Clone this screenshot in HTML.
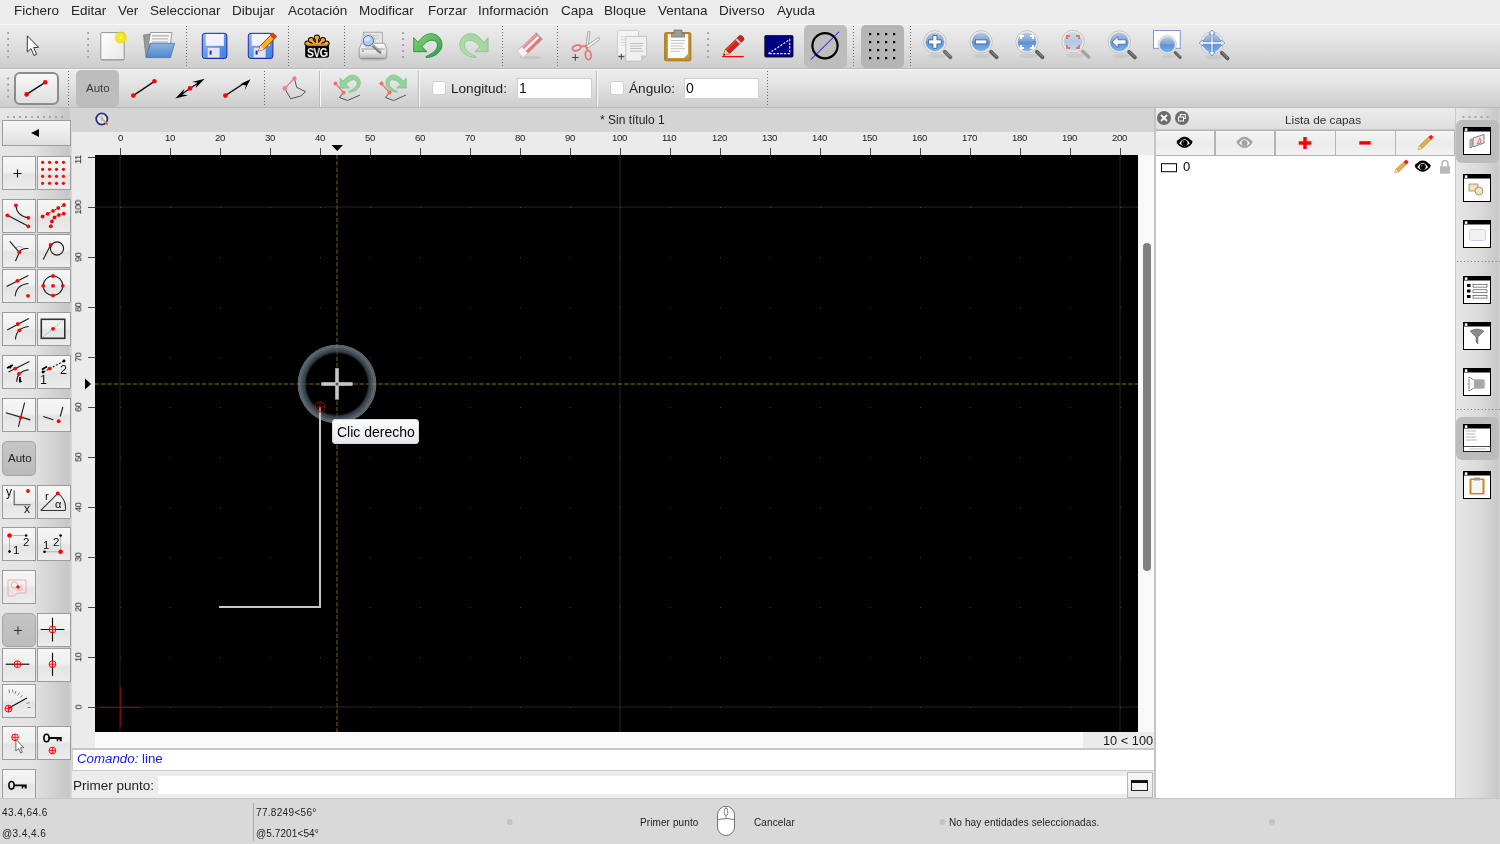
<!DOCTYPE html>
<html><head><meta charset="utf-8">
<style>
*{margin:0;padding:0;box-sizing:border-box}
html,body{width:1500px;height:844px;overflow:hidden;background:#ececec;font-family:"Liberation Sans",sans-serif;color:#222}
.a{position:absolute}
.t{white-space:nowrap;line-height:1.15;will-change:transform}
svg{position:absolute;left:0;top:0}
</style></head><body>
<div class="a " style="left:0px;top:0px;width:1500px;height:24px;background:#ececec"></div>
<div class="a " style="left:0px;top:24px;width:1500px;height:45px;background:linear-gradient(#ececec,#e4e4e4 35%,#cdcdcd);border-top:1px solid #f6f6f6;border-bottom:1px solid #bababa"></div>
<div class="a " style="left:0px;top:69px;width:1500px;height:39px;background:linear-gradient(#ececec,#e4e4e4 35%,#cdcdcd);border-top:1px solid #f6f6f6;border-bottom:1px solid #bababa"></div>
<span class="a t" style="left:14px;top:3px;font-size:13.5px;color:#262626">Fichero</span>
<span class="a t" style="left:71px;top:3px;font-size:13.5px;color:#262626">Editar</span>
<span class="a t" style="left:118px;top:3px;font-size:13.5px;color:#262626">Ver</span>
<span class="a t" style="left:150px;top:3px;font-size:13.5px;color:#262626">Seleccionar</span>
<span class="a t" style="left:232px;top:3px;font-size:13.5px;color:#262626">Dibujar</span>
<span class="a t" style="left:288px;top:3px;font-size:13.5px;color:#262626">Acotación</span>
<span class="a t" style="left:359px;top:3px;font-size:13.5px;color:#262626">Modificar</span>
<span class="a t" style="left:428px;top:3px;font-size:13.5px;color:#262626">Forzar</span>
<span class="a t" style="left:478px;top:3px;font-size:13.5px;color:#262626">Información</span>
<span class="a t" style="left:561px;top:3px;font-size:13.5px;color:#262626">Capa</span>
<span class="a t" style="left:604px;top:3px;font-size:13.5px;color:#262626">Bloque</span>
<span class="a t" style="left:658px;top:3px;font-size:13.5px;color:#262626">Ventana</span>
<span class="a t" style="left:719px;top:3px;font-size:13.5px;color:#262626">Diverso</span>
<span class="a t" style="left:777px;top:3px;font-size:13.5px;color:#262626">Ayuda</span>
<div class="a " style="left:0px;top:108px;width:72px;height:690px;background:linear-gradient(90deg,#e6e6e6,#e2e2e2 45%,#c6c6c6 96%,#dcdcdc)"></div>
<div class="a " style="left:72px;top:108px;width:1082px;height:24px;background:#d4d4d4"></div>
<span class="a t" style="left:600px;top:114px;font-size:12px;color:#1e1e1e">* Sin título 1</span>
<div class="a " style="left:72px;top:132px;width:1082px;height:23px;background:#ebebeb"></div>
<div class="a " style="left:72px;top:155px;width:23px;height:593px;background:#ebebeb"></div>
<div class="a " style="left:95px;top:155px;width:1043px;height:577px;background:#000"></div>
<div class="a " style="left:1138px;top:155px;width:16px;height:577px;background:#f9f9f9"></div>
<div class="a " style="left:95px;top:732px;width:1059px;height:16px;background:#f9f9f9"></div>
<div class="a " style="left:1083px;top:732px;width:71px;height:16px;background:#ebebeb"></div>
<span class="a t" style="left:1102.5px;top:733.5px;font-size:12.8px;color:#1a1a1a">10 &lt; 100</span>
<div class="a " style="left:1143px;top:242.5px;width:8px;height:328px;background:#808080;border-radius:4px"></div>
<div class="a " style="left:72px;top:748px;width:1082px;height:2px;background:#c6c6c6"></div>
<div class="a " style="left:72px;top:750px;width:1082px;height:20px;background:#fff;border-left:1px solid #d0d0d0"></div>
<div class="a " style="left:72px;top:770px;width:1082px;height:1px;background:#c9c9c9"></div>
<div class="a " style="left:72px;top:771px;width:1082px;height:27px;background:#ececec"></div>
<span class="a t" style="left:77.3px;top:751.3px;font-size:13.3px;color:#1620e8"><i>Comando:</i> line</span>
<span class="a t" style="left:73px;top:778px;font-size:13.5px;color:#1e1e1e">Primer punto:</span>
<div class="a " style="left:158px;top:776px;width:969px;height:18px;background:#fff"></div>
<div class="a " style="left:1127px;top:772px;width:26px;height:26px;background:linear-gradient(#f6f6f6,#e6e6e6);border:1px solid #b8b8b8"></div>
<div class="a " style="left:1154px;top:108px;width:2px;height:690px;background:#c3c3c3"></div>
<div class="a " style="left:1156px;top:108px;width:299px;height:22px;background:linear-gradient(#ececec,#dedede);border-bottom:1px solid #c8c8c8"></div>
<div class="a " style="left:1156px;top:156px;width:299px;height:642px;background:#fff"></div>
<span class="a t" style="left:1284.5px;top:113.5px;font-size:11.8px;color:#2e2e2e">Lista de capas</span>
<div class="a " style="left:1455px;top:108px;width:45px;height:690px;background:linear-gradient(90deg,#d8d8d8,#e4e4e4 40%,#cfcfcf)"></div>
<div class="a " style="left:0px;top:798px;width:1500px;height:46px;background:#d9d9d9;border-top:1px solid #c5c5c5"></div>
<span class="a t" style="left:117.9px;top:132.3px;font-size:9.6px;letter-spacing:-0.35px;color:#1a1a1a">0</span>
<span class="a t" style="left:165.1px;top:132.3px;font-size:9.6px;letter-spacing:-0.35px;color:#1a1a1a">10</span>
<span class="a t" style="left:215.1px;top:132.3px;font-size:9.6px;letter-spacing:-0.35px;color:#1a1a1a">20</span>
<span class="a t" style="left:265.1px;top:132.3px;font-size:9.6px;letter-spacing:-0.35px;color:#1a1a1a">30</span>
<span class="a t" style="left:315.1px;top:132.3px;font-size:9.6px;letter-spacing:-0.35px;color:#1a1a1a">40</span>
<span class="a t" style="left:365.1px;top:132.3px;font-size:9.6px;letter-spacing:-0.35px;color:#1a1a1a">50</span>
<span class="a t" style="left:415.1px;top:132.3px;font-size:9.6px;letter-spacing:-0.35px;color:#1a1a1a">60</span>
<span class="a t" style="left:465.1px;top:132.3px;font-size:9.6px;letter-spacing:-0.35px;color:#1a1a1a">70</span>
<span class="a t" style="left:515.1px;top:132.3px;font-size:9.6px;letter-spacing:-0.35px;color:#1a1a1a">80</span>
<span class="a t" style="left:565.1px;top:132.3px;font-size:9.6px;letter-spacing:-0.35px;color:#1a1a1a">90</span>
<span class="a t" style="left:612.3px;top:132.3px;font-size:9.6px;letter-spacing:-0.35px;color:#1a1a1a">100</span>
<span class="a t" style="left:662.3px;top:132.3px;font-size:9.6px;letter-spacing:-0.35px;color:#1a1a1a">110</span>
<span class="a t" style="left:712.3px;top:132.3px;font-size:9.6px;letter-spacing:-0.35px;color:#1a1a1a">120</span>
<span class="a t" style="left:762.3px;top:132.3px;font-size:9.6px;letter-spacing:-0.35px;color:#1a1a1a">130</span>
<span class="a t" style="left:812.3px;top:132.3px;font-size:9.6px;letter-spacing:-0.35px;color:#1a1a1a">140</span>
<span class="a t" style="left:862.3px;top:132.3px;font-size:9.6px;letter-spacing:-0.35px;color:#1a1a1a">150</span>
<span class="a t" style="left:912.3px;top:132.3px;font-size:9.6px;letter-spacing:-0.35px;color:#1a1a1a">160</span>
<span class="a t" style="left:962.3px;top:132.3px;font-size:9.6px;letter-spacing:-0.35px;color:#1a1a1a">170</span>
<span class="a t" style="left:1012.3px;top:132.3px;font-size:9.6px;letter-spacing:-0.35px;color:#1a1a1a">180</span>
<span class="a t" style="left:1062.3px;top:132.3px;font-size:9.6px;letter-spacing:-0.35px;color:#1a1a1a">190</span>
<span class="a t" style="left:1112.3px;top:132.3px;font-size:9.6px;letter-spacing:-0.35px;color:#1a1a1a">200</span>
<div class="a" style="left:72px;top:155px;width:23px;height:593px;overflow:hidden"><span class="a t" style="left:3.5px;top:547.0px;width:5.6px;font-size:9.2px;letter-spacing:-0.4px;color:#1a1a1a;transform:rotate(-90deg);transform-origin:50% 50%;text-align:center">0</span><span class="a t" style="left:0.7px;top:497.0px;width:11.2px;font-size:9.2px;letter-spacing:-0.4px;color:#1a1a1a;transform:rotate(-90deg);transform-origin:50% 50%;text-align:center">10</span><span class="a t" style="left:0.7px;top:447.0px;width:11.2px;font-size:9.2px;letter-spacing:-0.4px;color:#1a1a1a;transform:rotate(-90deg);transform-origin:50% 50%;text-align:center">20</span><span class="a t" style="left:0.7px;top:397.0px;width:11.2px;font-size:9.2px;letter-spacing:-0.4px;color:#1a1a1a;transform:rotate(-90deg);transform-origin:50% 50%;text-align:center">30</span><span class="a t" style="left:0.7px;top:347.0px;width:11.2px;font-size:9.2px;letter-spacing:-0.4px;color:#1a1a1a;transform:rotate(-90deg);transform-origin:50% 50%;text-align:center">40</span><span class="a t" style="left:0.7px;top:297.0px;width:11.2px;font-size:9.2px;letter-spacing:-0.4px;color:#1a1a1a;transform:rotate(-90deg);transform-origin:50% 50%;text-align:center">50</span><span class="a t" style="left:0.7px;top:247.0px;width:11.2px;font-size:9.2px;letter-spacing:-0.4px;color:#1a1a1a;transform:rotate(-90deg);transform-origin:50% 50%;text-align:center">60</span><span class="a t" style="left:0.7px;top:197.0px;width:11.2px;font-size:9.2px;letter-spacing:-0.4px;color:#1a1a1a;transform:rotate(-90deg);transform-origin:50% 50%;text-align:center">70</span><span class="a t" style="left:0.7px;top:147.0px;width:11.2px;font-size:9.2px;letter-spacing:-0.4px;color:#1a1a1a;transform:rotate(-90deg);transform-origin:50% 50%;text-align:center">80</span><span class="a t" style="left:0.7px;top:97.0px;width:11.2px;font-size:9.2px;letter-spacing:-0.4px;color:#1a1a1a;transform:rotate(-90deg);transform-origin:50% 50%;text-align:center">90</span><span class="a t" style="left:-2.1px;top:47.0px;width:16.8px;font-size:9.2px;letter-spacing:-0.4px;color:#1a1a1a;transform:rotate(-90deg);transform-origin:50% 50%;text-align:center">100</span><span class="a t" style="left:-2.1px;top:-3.0px;width:16.8px;font-size:9.2px;letter-spacing:-0.4px;color:#1a1a1a;transform:rotate(-90deg);transform-origin:50% 50%;text-align:center">110</span></div>
<div class="a " style="left:804px;top:25px;width:43px;height:43px;background:#bdbdbd;border-radius:5px"></div>
<div class="a " style="left:861px;top:25px;width:43px;height:43px;background:#b5b5b5;border-radius:5px"></div>
<div class="a " style="left:14px;top:72px;width:45px;height:33px;background:linear-gradient(#f8f8f8,#ebebeb 50%,#e0e0e0);border:2.5px solid #8c8c8c;border-radius:6px"></div>
<div class="a " style="left:76px;top:70px;width:43px;height:37px;background:#bdbdbd;border-radius:5px"></div>
<span class="a t" style="left:86px;top:82px;font-size:11.5px;color:#3a3a3a">Auto</span>
<div class="a " style="left:432px;top:81px;width:14px;height:14px;background:#fff;border:1px solid #cfcfcf;border-radius:3px"></div>
<span class="a t" style="left:451px;top:80.5px;font-size:13.6px;color:#1e1e1e">Longitud:</span>
<div class="a " style="left:517px;top:78px;width:75px;height:21px;background:#fff;border:1px solid #d0d0d0"></div>
<span class="a t" style="left:519px;top:80px;font-size:14px;color:#111">1</span>
<div class="a " style="left:610px;top:81px;width:14px;height:14px;background:#fff;border:1px solid #cfcfcf;border-radius:3px"></div>
<span class="a t" style="left:629px;top:80.5px;font-size:13.6px;color:#1e1e1e">Ángulo:</span>
<div class="a " style="left:684px;top:78px;width:75px;height:21px;background:#fff;border:1px solid #d0d0d0"></div>
<span class="a t" style="left:686px;top:80px;font-size:14px;color:#111">0</span>
<div class="a " style="left:1.5px;top:120px;width:69px;height:25.5px;background:linear-gradient(#f6f6f6,#ebebeb 50%,#e0e0e0);border:1.5px solid #9c9c9c"></div>
<div class="a " style="left:1.5px;top:156px;width:34.5px;height:34px;background:linear-gradient(#f6f6f6,#f0f0f0 45%,#e4e4e4 55%,#ececec);border:1.5px solid #9c9c9c"></div>
<div class="a " style="left:36.5px;top:156px;width:34.5px;height:34px;background:linear-gradient(#f6f6f6,#f0f0f0 45%,#e4e4e4 55%,#ececec);border:1.5px solid #9c9c9c"></div>
<div class="a " style="left:1.5px;top:199px;width:34.5px;height:34px;background:linear-gradient(#f6f6f6,#f0f0f0 45%,#e4e4e4 55%,#ececec);border:1.5px solid #9c9c9c"></div>
<div class="a " style="left:36.5px;top:199px;width:34.5px;height:34px;background:linear-gradient(#f6f6f6,#f0f0f0 45%,#e4e4e4 55%,#ececec);border:1.5px solid #9c9c9c"></div>
<div class="a " style="left:1.5px;top:234px;width:34.5px;height:34px;background:linear-gradient(#f6f6f6,#f0f0f0 45%,#e4e4e4 55%,#ececec);border:1.5px solid #9c9c9c"></div>
<div class="a " style="left:36.5px;top:234px;width:34.5px;height:34px;background:linear-gradient(#f6f6f6,#f0f0f0 45%,#e4e4e4 55%,#ececec);border:1.5px solid #9c9c9c"></div>
<div class="a " style="left:1.5px;top:269px;width:34.5px;height:34px;background:linear-gradient(#f6f6f6,#f0f0f0 45%,#e4e4e4 55%,#ececec);border:1.5px solid #9c9c9c"></div>
<div class="a " style="left:36.5px;top:269px;width:34.5px;height:34px;background:linear-gradient(#f6f6f6,#f0f0f0 45%,#e4e4e4 55%,#ececec);border:1.5px solid #9c9c9c"></div>
<div class="a " style="left:1.5px;top:312px;width:34.5px;height:34px;background:linear-gradient(#f6f6f6,#f0f0f0 45%,#e4e4e4 55%,#ececec);border:1.5px solid #9c9c9c"></div>
<div class="a " style="left:36.5px;top:312px;width:34.5px;height:34px;background:linear-gradient(#f6f6f6,#f0f0f0 45%,#e4e4e4 55%,#ececec);border:1.5px solid #9c9c9c"></div>
<div class="a " style="left:1.5px;top:355px;width:34.5px;height:34px;background:linear-gradient(#f6f6f6,#f0f0f0 45%,#e4e4e4 55%,#ececec);border:1.5px solid #9c9c9c"></div>
<div class="a " style="left:36.5px;top:355px;width:34.5px;height:34px;background:linear-gradient(#f6f6f6,#f0f0f0 45%,#e4e4e4 55%,#ececec);border:1.5px solid #9c9c9c"></div>
<div class="a " style="left:1.5px;top:398px;width:34.5px;height:34px;background:linear-gradient(#f6f6f6,#f0f0f0 45%,#e4e4e4 55%,#ececec);border:1.5px solid #9c9c9c"></div>
<div class="a " style="left:36.5px;top:398px;width:34.5px;height:34px;background:linear-gradient(#f6f6f6,#f0f0f0 45%,#e4e4e4 55%,#ececec);border:1.5px solid #9c9c9c"></div>
<div class="a " style="left:1.5px;top:485px;width:34.5px;height:34px;background:linear-gradient(#f6f6f6,#f0f0f0 45%,#e4e4e4 55%,#ececec);border:1.5px solid #9c9c9c"></div>
<div class="a " style="left:36.5px;top:485px;width:34.5px;height:34px;background:linear-gradient(#f6f6f6,#f0f0f0 45%,#e4e4e4 55%,#ececec);border:1.5px solid #9c9c9c"></div>
<div class="a " style="left:1.5px;top:527px;width:34.5px;height:34px;background:linear-gradient(#f6f6f6,#f0f0f0 45%,#e4e4e4 55%,#ececec);border:1.5px solid #9c9c9c"></div>
<div class="a " style="left:36.5px;top:527px;width:34.5px;height:34px;background:linear-gradient(#f6f6f6,#f0f0f0 45%,#e4e4e4 55%,#ececec);border:1.5px solid #9c9c9c"></div>
<div class="a " style="left:1.5px;top:613px;width:34.5px;height:34px;background:linear-gradient(#c4c4c4,#bcbcbc);border:1px solid #a6a6a6;border-radius:5px"></div>
<div class="a " style="left:36.5px;top:613px;width:34.5px;height:34px;background:linear-gradient(#f6f6f6,#f0f0f0 45%,#e4e4e4 55%,#ececec);border:1.5px solid #9c9c9c"></div>
<div class="a " style="left:1.5px;top:648px;width:34.5px;height:34px;background:linear-gradient(#f6f6f6,#f0f0f0 45%,#e4e4e4 55%,#ececec);border:1.5px solid #9c9c9c"></div>
<div class="a " style="left:36.5px;top:648px;width:34.5px;height:34px;background:linear-gradient(#f6f6f6,#f0f0f0 45%,#e4e4e4 55%,#ececec);border:1.5px solid #9c9c9c"></div>
<div class="a " style="left:1.5px;top:726px;width:34.5px;height:34px;background:linear-gradient(#f6f6f6,#f0f0f0 45%,#e4e4e4 55%,#ececec);border:1.5px solid #9c9c9c"></div>
<div class="a " style="left:36.5px;top:726px;width:34.5px;height:34px;background:linear-gradient(#f6f6f6,#f0f0f0 45%,#e4e4e4 55%,#ececec);border:1.5px solid #9c9c9c"></div>
<div class="a " style="left:1.5px;top:570px;width:34.5px;height:34px;background:linear-gradient(#f6f6f6,#f0f0f0 45%,#e4e4e4 55%,#ececec);border:1.5px solid #9c9c9c"></div>
<div class="a " style="left:1.5px;top:684px;width:34.5px;height:34px;background:linear-gradient(#f6f6f6,#f0f0f0 45%,#e4e4e4 55%,#ececec);border:1.5px solid #9c9c9c"></div>
<div class="a " style="left:1.5px;top:769px;width:34.5px;height:29px;background:linear-gradient(#f6f6f6,#f0f0f0 45%,#e4e4e4 55%,#ececec);border:1.5px solid #9c9c9c;border-bottom:none"></div>
<div class="a " style="left:1.5px;top:441px;width:34.5px;height:34.5px;background:linear-gradient(#c6c6c6,#bababa);border:1px solid #a4a4a4;border-radius:5px"></div>
<span class="a t" style="left:7.5px;top:452px;font-size:11.5px;color:#222">Auto</span>
<span class="a t" style="left:59.8px;top:362.5px;font-size:12.5px;color:#111">2</span>
<span class="a t" style="left:40px;top:373px;font-size:12.5px;color:#111">1</span>
<span class="a t" style="left:6px;top:486px;font-size:12px;color:#111">y</span>
<span class="a t" style="left:24px;top:502.5px;font-size:12px;color:#111">x</span>
<span class="a t" style="left:44.5px;top:490px;font-size:11.5px;color:#111">r</span>
<span class="a t" style="left:54.5px;top:497.5px;font-size:11px;color:#111">α</span>
<span class="a t" style="left:23.2px;top:536px;font-size:11.5px;color:#111">2</span>
<span class="a t" style="left:13.3px;top:544px;font-size:11.5px;color:#111">1</span>
<span class="a t" style="left:53.2px;top:535.5px;font-size:11.5px;color:#111">2</span>
<span class="a t" style="left:42.8px;top:538.5px;font-size:11.5px;color:#111">1</span>
<div class="a " style="left:1156px;top:130px;width:299px;height:26px;background:#b4b4b4"></div>
<div class="a " style="left:1156px;top:131px;width:58px;height:24px;background:linear-gradient(#f4f4f4,#ececec 50%,#f2f2f2)"></div>
<div class="a " style="left:1216px;top:131px;width:58px;height:24px;background:linear-gradient(#f4f4f4,#ececec 50%,#f2f2f2)"></div>
<div class="a " style="left:1276px;top:131px;width:59px;height:24px;background:linear-gradient(#f4f4f4,#ececec 50%,#f2f2f2)"></div>
<div class="a " style="left:1336px;top:131px;width:59px;height:24px;background:linear-gradient(#f4f4f4,#ececec 50%,#f2f2f2)"></div>
<div class="a " style="left:1396px;top:131px;width:58px;height:24px;background:linear-gradient(#f4f4f4,#ececec 50%,#f2f2f2)"></div>
<span class="a t" style="left:1183px;top:159.5px;font-size:13px;color:#000">0</span>
<div class="a " style="left:1455px;top:108px;width:1px;height:690px;background:#c8c8c8"></div>
<div class="a " style="left:1456px;top:108px;width:44px;height:690px;background:linear-gradient(90deg,#e6e6e6,#dadada 55%,#c8c8c8 96%,#d6d6d6)"></div>
<div class="a " style="left:1456px;top:120px;width:43px;height:43px;background:#bcbcbc;border-radius:6px"></div>
<div class="a " style="left:1456px;top:417px;width:43px;height:43px;background:#bcbcbc;border-radius:6px"></div>
<span class="a t" style="left:2px;top:807px;font-size:10px;letter-spacing:0.45px;color:#222">43.4,64.6</span>
<span class="a t" style="left:2px;top:827.5px;font-size:10px;letter-spacing:0.45px;color:#222">@3.4,4.6</span>
<div class="a " style="left:253px;top:803px;width:1px;height:38px;background:#a8a8a8"></div>
<span class="a t" style="left:256px;top:807px;font-size:10px;letter-spacing:0.32px;color:#222">77.8249&lt;56°</span>
<span class="a t" style="left:256px;top:827.5px;font-size:10px;letter-spacing:0.1px;color:#222">@5.7201&lt;54°</span>
<span class="a t" style="left:640px;top:817px;font-size:10px;letter-spacing:0.1px;color:#222">Primer punto</span>
<span class="a t" style="left:754px;top:817px;font-size:10px;letter-spacing:0.1px;color:#222">Cancelar</span>
<span class="a t" style="left:949px;top:817px;font-size:10px;letter-spacing:0.12px;color:#222">No hay entidades seleccionadas.</span>
<svg width="1500" height="844" viewBox="0 0 1500 844">
<line x1="120.5" y1="148" x2="120.5" y2="155" stroke="#444" stroke-width="1"/>
<line x1="170.5" y1="148" x2="170.5" y2="155" stroke="#444" stroke-width="1"/>
<line x1="220.5" y1="148" x2="220.5" y2="155" stroke="#444" stroke-width="1"/>
<line x1="270.5" y1="148" x2="270.5" y2="155" stroke="#444" stroke-width="1"/>
<line x1="320.5" y1="148" x2="320.5" y2="155" stroke="#444" stroke-width="1"/>
<line x1="370.5" y1="148" x2="370.5" y2="155" stroke="#444" stroke-width="1"/>
<line x1="420.5" y1="148" x2="420.5" y2="155" stroke="#444" stroke-width="1"/>
<line x1="470.5" y1="148" x2="470.5" y2="155" stroke="#444" stroke-width="1"/>
<line x1="520.5" y1="148" x2="520.5" y2="155" stroke="#444" stroke-width="1"/>
<line x1="570.5" y1="148" x2="570.5" y2="155" stroke="#444" stroke-width="1"/>
<line x1="620.5" y1="148" x2="620.5" y2="155" stroke="#444" stroke-width="1"/>
<line x1="670.5" y1="148" x2="670.5" y2="155" stroke="#444" stroke-width="1"/>
<line x1="720.5" y1="148" x2="720.5" y2="155" stroke="#444" stroke-width="1"/>
<line x1="770.5" y1="148" x2="770.5" y2="155" stroke="#444" stroke-width="1"/>
<line x1="820.5" y1="148" x2="820.5" y2="155" stroke="#444" stroke-width="1"/>
<line x1="870.5" y1="148" x2="870.5" y2="155" stroke="#444" stroke-width="1"/>
<line x1="920.5" y1="148" x2="920.5" y2="155" stroke="#444" stroke-width="1"/>
<line x1="970.5" y1="148" x2="970.5" y2="155" stroke="#444" stroke-width="1"/>
<line x1="1020.5" y1="148" x2="1020.5" y2="155" stroke="#444" stroke-width="1"/>
<line x1="1070.5" y1="148" x2="1070.5" y2="155" stroke="#444" stroke-width="1"/>
<line x1="1120.5" y1="148" x2="1120.5" y2="155" stroke="#444" stroke-width="1"/>
<line x1="88" y1="707.5" x2="95" y2="707.5" stroke="#444" stroke-width="1"/>
<line x1="88" y1="657.5" x2="95" y2="657.5" stroke="#444" stroke-width="1"/>
<line x1="88" y1="607.5" x2="95" y2="607.5" stroke="#444" stroke-width="1"/>
<line x1="88" y1="557.5" x2="95" y2="557.5" stroke="#444" stroke-width="1"/>
<line x1="88" y1="507.5" x2="95" y2="507.5" stroke="#444" stroke-width="1"/>
<line x1="88" y1="457.5" x2="95" y2="457.5" stroke="#444" stroke-width="1"/>
<line x1="88" y1="407.5" x2="95" y2="407.5" stroke="#444" stroke-width="1"/>
<line x1="88" y1="357.5" x2="95" y2="357.5" stroke="#444" stroke-width="1"/>
<line x1="88" y1="307.5" x2="95" y2="307.5" stroke="#444" stroke-width="1"/>
<line x1="88" y1="257.5" x2="95" y2="257.5" stroke="#444" stroke-width="1"/>
<line x1="88" y1="207.5" x2="95" y2="207.5" stroke="#444" stroke-width="1"/>
<line x1="88" y1="157.5" x2="95" y2="157.5" stroke="#444" stroke-width="1"/>
<path d="M331.5 145 L343 145 L337.2 151 Z" fill="#000"/>
<path d="M85 378.5 L91 384 L85 389.5 Z" fill="#000"/>
<svg x="95" y="155" width="1043" height="577" viewBox="95 155 1043 577" overflow="hidden"><rect x="95" y="206" width="1043" height="2" fill="#131313"/><rect x="95" y="706" width="1043" height="2" fill="#131313"/><rect x="119" y="155" width="2" height="577" fill="#131313"/><rect x="619" y="155" width="2" height="577" fill="#131313"/><rect x="1119" y="155" width="2" height="577" fill="#131313"/><path d="M120 707h1v1h-1zM120 657h1v1h-1zM120 607h1v1h-1zM120 557h1v1h-1zM120 507h1v1h-1zM120 457h1v1h-1zM120 407h1v1h-1zM120 357h1v1h-1zM120 307h1v1h-1zM120 257h1v1h-1zM120 207h1v1h-1zM120 157h1v1h-1zM170 707h1v1h-1zM170 657h1v1h-1zM170 607h1v1h-1zM170 557h1v1h-1zM170 507h1v1h-1zM170 457h1v1h-1zM170 407h1v1h-1zM170 357h1v1h-1zM170 307h1v1h-1zM170 257h1v1h-1zM170 207h1v1h-1zM170 157h1v1h-1zM220 707h1v1h-1zM220 657h1v1h-1zM220 607h1v1h-1zM220 557h1v1h-1zM220 507h1v1h-1zM220 457h1v1h-1zM220 407h1v1h-1zM220 357h1v1h-1zM220 307h1v1h-1zM220 257h1v1h-1zM220 207h1v1h-1zM220 157h1v1h-1zM270 707h1v1h-1zM270 657h1v1h-1zM270 607h1v1h-1zM270 557h1v1h-1zM270 507h1v1h-1zM270 457h1v1h-1zM270 407h1v1h-1zM270 357h1v1h-1zM270 307h1v1h-1zM270 257h1v1h-1zM270 207h1v1h-1zM270 157h1v1h-1zM320 707h1v1h-1zM320 657h1v1h-1zM320 607h1v1h-1zM320 557h1v1h-1zM320 507h1v1h-1zM320 457h1v1h-1zM320 407h1v1h-1zM320 357h1v1h-1zM320 307h1v1h-1zM320 257h1v1h-1zM320 207h1v1h-1zM320 157h1v1h-1zM370 707h1v1h-1zM370 657h1v1h-1zM370 607h1v1h-1zM370 557h1v1h-1zM370 507h1v1h-1zM370 457h1v1h-1zM370 407h1v1h-1zM370 357h1v1h-1zM370 307h1v1h-1zM370 257h1v1h-1zM370 207h1v1h-1zM370 157h1v1h-1zM420 707h1v1h-1zM420 657h1v1h-1zM420 607h1v1h-1zM420 557h1v1h-1zM420 507h1v1h-1zM420 457h1v1h-1zM420 407h1v1h-1zM420 357h1v1h-1zM420 307h1v1h-1zM420 257h1v1h-1zM420 207h1v1h-1zM420 157h1v1h-1zM470 707h1v1h-1zM470 657h1v1h-1zM470 607h1v1h-1zM470 557h1v1h-1zM470 507h1v1h-1zM470 457h1v1h-1zM470 407h1v1h-1zM470 357h1v1h-1zM470 307h1v1h-1zM470 257h1v1h-1zM470 207h1v1h-1zM470 157h1v1h-1zM520 707h1v1h-1zM520 657h1v1h-1zM520 607h1v1h-1zM520 557h1v1h-1zM520 507h1v1h-1zM520 457h1v1h-1zM520 407h1v1h-1zM520 357h1v1h-1zM520 307h1v1h-1zM520 257h1v1h-1zM520 207h1v1h-1zM520 157h1v1h-1zM570 707h1v1h-1zM570 657h1v1h-1zM570 607h1v1h-1zM570 557h1v1h-1zM570 507h1v1h-1zM570 457h1v1h-1zM570 407h1v1h-1zM570 357h1v1h-1zM570 307h1v1h-1zM570 257h1v1h-1zM570 207h1v1h-1zM570 157h1v1h-1zM620 707h1v1h-1zM620 657h1v1h-1zM620 607h1v1h-1zM620 557h1v1h-1zM620 507h1v1h-1zM620 457h1v1h-1zM620 407h1v1h-1zM620 357h1v1h-1zM620 307h1v1h-1zM620 257h1v1h-1zM620 207h1v1h-1zM620 157h1v1h-1zM670 707h1v1h-1zM670 657h1v1h-1zM670 607h1v1h-1zM670 557h1v1h-1zM670 507h1v1h-1zM670 457h1v1h-1zM670 407h1v1h-1zM670 357h1v1h-1zM670 307h1v1h-1zM670 257h1v1h-1zM670 207h1v1h-1zM670 157h1v1h-1zM720 707h1v1h-1zM720 657h1v1h-1zM720 607h1v1h-1zM720 557h1v1h-1zM720 507h1v1h-1zM720 457h1v1h-1zM720 407h1v1h-1zM720 357h1v1h-1zM720 307h1v1h-1zM720 257h1v1h-1zM720 207h1v1h-1zM720 157h1v1h-1zM770 707h1v1h-1zM770 657h1v1h-1zM770 607h1v1h-1zM770 557h1v1h-1zM770 507h1v1h-1zM770 457h1v1h-1zM770 407h1v1h-1zM770 357h1v1h-1zM770 307h1v1h-1zM770 257h1v1h-1zM770 207h1v1h-1zM770 157h1v1h-1zM820 707h1v1h-1zM820 657h1v1h-1zM820 607h1v1h-1zM820 557h1v1h-1zM820 507h1v1h-1zM820 457h1v1h-1zM820 407h1v1h-1zM820 357h1v1h-1zM820 307h1v1h-1zM820 257h1v1h-1zM820 207h1v1h-1zM820 157h1v1h-1zM870 707h1v1h-1zM870 657h1v1h-1zM870 607h1v1h-1zM870 557h1v1h-1zM870 507h1v1h-1zM870 457h1v1h-1zM870 407h1v1h-1zM870 357h1v1h-1zM870 307h1v1h-1zM870 257h1v1h-1zM870 207h1v1h-1zM870 157h1v1h-1zM920 707h1v1h-1zM920 657h1v1h-1zM920 607h1v1h-1zM920 557h1v1h-1zM920 507h1v1h-1zM920 457h1v1h-1zM920 407h1v1h-1zM920 357h1v1h-1zM920 307h1v1h-1zM920 257h1v1h-1zM920 207h1v1h-1zM920 157h1v1h-1zM970 707h1v1h-1zM970 657h1v1h-1zM970 607h1v1h-1zM970 557h1v1h-1zM970 507h1v1h-1zM970 457h1v1h-1zM970 407h1v1h-1zM970 357h1v1h-1zM970 307h1v1h-1zM970 257h1v1h-1zM970 207h1v1h-1zM970 157h1v1h-1zM1020 707h1v1h-1zM1020 657h1v1h-1zM1020 607h1v1h-1zM1020 557h1v1h-1zM1020 507h1v1h-1zM1020 457h1v1h-1zM1020 407h1v1h-1zM1020 357h1v1h-1zM1020 307h1v1h-1zM1020 257h1v1h-1zM1020 207h1v1h-1zM1020 157h1v1h-1zM1070 707h1v1h-1zM1070 657h1v1h-1zM1070 607h1v1h-1zM1070 557h1v1h-1zM1070 507h1v1h-1zM1070 457h1v1h-1zM1070 407h1v1h-1zM1070 357h1v1h-1zM1070 307h1v1h-1zM1070 257h1v1h-1zM1070 207h1v1h-1zM1070 157h1v1h-1zM1120 707h1v1h-1zM1120 657h1v1h-1zM1120 607h1v1h-1zM1120 557h1v1h-1zM1120 507h1v1h-1zM1120 457h1v1h-1zM1120 407h1v1h-1zM1120 357h1v1h-1zM1120 307h1v1h-1zM1120 257h1v1h-1zM1120 207h1v1h-1zM1120 157h1v1h-1z" fill="#444444"/><line x1="100" y1="707.5" x2="140" y2="707.5" stroke="#7a0c0c" stroke-width="1.2"/><line x1="120.5" y1="687" x2="120.5" y2="727" stroke="#7a0c0c" stroke-width="1.2"/><line x1="95" y1="384" x2="1138" y2="384" stroke="#5e4a12" stroke-width="1.3" stroke-dasharray="4.3 2"/><line x1="337" y1="155" x2="337" y2="732" stroke="#5e4a12" stroke-width="1.3" stroke-dasharray="4.3 2"/><defs><radialGradient id="ring" cx="337" cy="384" r="40" gradientUnits="userSpaceOnUse"><stop offset="0.74" stop-color="#000" stop-opacity="0"/><stop offset="0.79" stop-color="#2e3840"/><stop offset="0.83" stop-color="#55636e"/><stop offset="0.85" stop-color="#4a5862"/><stop offset="0.88" stop-color="#71818e"/><stop offset="0.90" stop-color="#62727e"/><stop offset="0.93" stop-color="#8898a5"/><stop offset="0.95" stop-color="#74848f"/><stop offset="0.975" stop-color="#7d8d99"/><stop offset="1" stop-color="#000" stop-opacity="0"/></radialGradient></defs><circle cx="337" cy="384" r="40" fill="url(#ring)" opacity="0.72"/><polyline points="219,607 320,607 320,407" fill="none" stroke="#c6c6c6" stroke-width="2"/><line x1="321.3" y1="384" x2="352.7" y2="384" stroke="#c8c8c8" stroke-width="3.6"/><line x1="337" y1="368.2" x2="337" y2="399.6" stroke="#c8c8c8" stroke-width="3.6"/><circle cx="337" cy="384" r="1.5" fill="#6a5010"/><circle cx="320" cy="407" r="5" fill="none" stroke="#a01010" stroke-width="1"/><line x1="315" y1="407" x2="325" y2="407" stroke="#a01010" stroke-width="0.8"/><line x1="320" y1="402" x2="320" y2="412" stroke="#a01010" stroke-width="0.8"/></svg>
<rect x="7.2" y="32.2" width="1.8" height="1.8" fill="#9a9a9a"/>
<rect x="7.2" y="38.2" width="1.8" height="1.8" fill="#9a9a9a"/>
<rect x="7.2" y="44.2" width="1.8" height="1.8" fill="#9a9a9a"/>
<rect x="7.2" y="50.2" width="1.8" height="1.8" fill="#9a9a9a"/>
<rect x="7.2" y="56.2" width="1.8" height="1.8" fill="#9a9a9a"/>
<rect x="87.2" y="32.2" width="1.8" height="1.8" fill="#9a9a9a"/>
<rect x="87.2" y="38.2" width="1.8" height="1.8" fill="#9a9a9a"/>
<rect x="87.2" y="44.2" width="1.8" height="1.8" fill="#9a9a9a"/>
<rect x="87.2" y="50.2" width="1.8" height="1.8" fill="#9a9a9a"/>
<rect x="87.2" y="56.2" width="1.8" height="1.8" fill="#9a9a9a"/>
<line x1="186.5" y1="26" x2="186.5" y2="66" stroke="#6a6a6a" stroke-width="1" stroke-dasharray="1 2"/>
<line x1="288.5" y1="26" x2="288.5" y2="66" stroke="#6a6a6a" stroke-width="1" stroke-dasharray="1 2"/>
<line x1="344.5" y1="26" x2="344.5" y2="66" stroke="#6a6a6a" stroke-width="1" stroke-dasharray="1 2"/>
<rect x="402.2" y="32.2" width="1.8" height="1.8" fill="#9a9a9a"/>
<rect x="402.2" y="38.2" width="1.8" height="1.8" fill="#9a9a9a"/>
<rect x="402.2" y="44.2" width="1.8" height="1.8" fill="#9a9a9a"/>
<rect x="402.2" y="50.2" width="1.8" height="1.8" fill="#9a9a9a"/>
<rect x="402.2" y="56.2" width="1.8" height="1.8" fill="#9a9a9a"/>
<line x1="502.5" y1="26" x2="502.5" y2="66" stroke="#6a6a6a" stroke-width="1" stroke-dasharray="1 2"/>
<line x1="557.5" y1="26" x2="557.5" y2="66" stroke="#6a6a6a" stroke-width="1" stroke-dasharray="1 2"/>
<rect x="707.2" y="32.2" width="1.8" height="1.8" fill="#9a9a9a"/>
<rect x="707.2" y="38.2" width="1.8" height="1.8" fill="#9a9a9a"/>
<rect x="707.2" y="44.2" width="1.8" height="1.8" fill="#9a9a9a"/>
<rect x="707.2" y="50.2" width="1.8" height="1.8" fill="#9a9a9a"/>
<rect x="707.2" y="56.2" width="1.8" height="1.8" fill="#9a9a9a"/>
<line x1="853.5" y1="26" x2="853.5" y2="66" stroke="#6a6a6a" stroke-width="1" stroke-dasharray="1 2"/>
<line x1="910.5" y1="26" x2="910.5" y2="66" stroke="#6a6a6a" stroke-width="1" stroke-dasharray="1 2"/>
<rect x="7.2" y="77.6" width="1.8" height="1.8" fill="#9a9a9a"/>
<rect x="7.2" y="83.6" width="1.8" height="1.8" fill="#9a9a9a"/>
<rect x="7.2" y="89.6" width="1.8" height="1.8" fill="#9a9a9a"/>
<rect x="7.2" y="95.6" width="1.8" height="1.8" fill="#9a9a9a"/>
<line x1="68.5" y1="71" x2="68.5" y2="105" stroke="#6a6a6a" stroke-width="1" stroke-dasharray="1 2"/>
<line x1="264.5" y1="71" x2="264.5" y2="105" stroke="#6a6a6a" stroke-width="1" stroke-dasharray="1 2"/>
<line x1="767.5" y1="71" x2="767.5" y2="105" stroke="#6a6a6a" stroke-width="1" stroke-dasharray="1 2"/>
<rect x="319" y="71" width="1" height="36" fill="#bcbcbc"/><rect x="320" y="71" width="1" height="36" fill="#fafafa"/>
<rect x="418" y="71" width="1" height="36" fill="#bcbcbc"/><rect x="419" y="71" width="1" height="36" fill="#fafafa"/>
<rect x="596" y="71" width="1" height="36" fill="#bcbcbc"/><rect x="597" y="71" width="1" height="36" fill="#fafafa"/>
<line x1="26.6" y1="94.4" x2="45.2" y2="82.3" stroke="#111" stroke-width="1.4"/><circle cx="26.6" cy="94.4" r="2.3" fill="red"/><circle cx="45.2" cy="82.3" r="2.3" fill="red"/>
<line x1="133.3" y1="95.6" x2="154.4" y2="81.3" stroke="#111" stroke-width="1.4"/><circle cx="133.3" cy="95.6" r="2.3" fill="red"/><circle cx="154.4" cy="81.3" r="2.3" fill="red"/>
<line x1="179" y1="96" x2="201" y2="81" stroke="#111" stroke-width="1.4"/><path d="M175.3 98.4 L184.5 88.8 L182.5 94.5 L188 95.2 Z" fill="#000"/><path d="M204.7 78.7 L195.5 88.3 L197.5 82.6 L192 81.9 Z" fill="#000"/><circle cx="190" cy="88.4" r="2.3" fill="red"/>
<line x1="225.3" y1="95.6" x2="246" y2="82" stroke="#111" stroke-width="1.4"/><path d="M250.4 79.3 L240.5 84.3 L246 85.5 L244.5 90.5 Z" fill="#000"/><circle cx="225.3" cy="95.6" r="2.3" fill="red"/>
<polyline points="284.7,88.3 294.4,78.4" fill="none" stroke="#f07070" stroke-width="1.2"/><polyline points="294.4,78.4 296.7,87.3 305.6,91.7 300.7,96 290.7,98.7 284.7,88.3" fill="none" stroke="#555" stroke-width="1"/><circle cx="284.7" cy="88.3" r="2.2" fill="#f08080"/><circle cx="294.4" cy="78.4" r="2.2" fill="#f08080"/>
<g transform="translate(0,0)"><polyline points="343.5,92.5 339.5,97.5 347.5,100.5 360,95" fill="none" stroke="#555" stroke-width="1"/><line x1="335.5" y1="83.5" x2="343.5" y2="92.5" stroke="#f07070" stroke-width="1.3"/><circle cx="335.5" cy="83.5" r="2" fill="#f07070"/><circle cx="343.5" cy="92.5" r="2" fill="#f07070"/></g>
<g transform="translate(46,0)"><polyline points="343.5,92.5 339.5,97.5 347.5,100.5 360,95" fill="none" stroke="#555" stroke-width="1"/><line x1="335.5" y1="83.5" x2="343.5" y2="92.5" stroke="#f07070" stroke-width="1.3"/><circle cx="335.5" cy="83.5" r="2" fill="#f07070"/><circle cx="343.5" cy="92.5" r="2" fill="#f07070"/></g>
<g transform="translate(340,75) scale(0.72) translate(-413.7,-33.6)"><path d="M413.7 37.6 L418 42.3 C422 37 426 33.7 431 33.7 C437 33.7 442 38.5 442 44.5 C442 51.5 435 57.5 426 57.5 L426.5 56 C432 54 437.5 50 437.5 45 C437.5 42 435 40.2 432 40.2 C428 40.2 424.5 43.5 421.8 46.6 L427 51.7 L413.7 51.7 Z" fill="#94d49c" stroke="#7cc088" stroke-width="1"/></g>
<g transform="translate(386,75) scale(0.72) translate(-460,-33.6)"><g transform="translate(901.8,0) scale(-1,1)"><path d="M413.7 37.6 L418 42.3 C422 37 426 33.7 431 33.7 C437 33.7 442 38.5 442 44.5 C442 51.5 435 57.5 426 57.5 L426.5 56 C432 54 437.5 50 437.5 45 C437.5 42 435 40.2 432 40.2 C428 40.2 424.5 43.5 421.8 46.6 L427 51.7 L413.7 51.7 Z" fill="#94d49c" stroke="#7cc088" stroke-width="1"/></g></g>
<defs>
<linearGradient id="gBlueF" x1="0" y1="0" x2="1" y2="1"><stop offset="0" stop-color="#8ab8f4"/><stop offset="1" stop-color="#3b7ee6"/></linearGradient>
<linearGradient id="gFold" x1="0" y1="0" x2="0" y2="1"><stop offset="0" stop-color="#8fb4e0"/><stop offset="1" stop-color="#4f86cc"/></linearGradient>
<linearGradient id="gUndo" x1="0" y1="0" x2="1" y2="1"><stop offset="0" stop-color="#8cd47a"/><stop offset="1" stop-color="#2a9e42"/></linearGradient>
<linearGradient id="gRedo" x1="0" y1="0" x2="1" y2="1"><stop offset="0" stop-color="#9fd2a0"/><stop offset="1" stop-color="#b8e0a8"/></linearGradient>
<linearGradient id="gMag" x1="0" y1="0" x2="0" y2="1"><stop offset="0" stop-color="#b4c8e4"/><stop offset="0.45" stop-color="#7ea4d6"/><stop offset="0.5" stop-color="#5e90d4"/><stop offset="1" stop-color="#78b2f0"/></linearGradient>
<linearGradient id="gMagP" x1="0" y1="0" x2="0" y2="1"><stop offset="0" stop-color="#d0dcec"/><stop offset="0.5" stop-color="#b4c8e4"/><stop offset="1" stop-color="#c0d6f0"/></linearGradient>
<linearGradient id="gPaper" x1="0" y1="0" x2="1" y2="1"><stop offset="0" stop-color="#ffffff"/><stop offset="1" stop-color="#e8e8e8"/></linearGradient>
<radialGradient id="gGlow" cx="0.5" cy="0.5" r="0.5"><stop offset="0" stop-color="#ffffe0"/><stop offset="0.25" stop-color="#f4ec20"/><stop offset="0.7" stop-color="#ece010" stop-opacity="0.85"/><stop offset="1" stop-color="#f0e000" stop-opacity="0"/></radialGradient>
</defs>
<path d="M27.3 35.8 L27.3 52 L31 48.6 L34 55.5 L36.6 54.3 L33.6 47.5 L38.6 47.3 Z" fill="#fff" stroke="#222" stroke-width="0.9" stroke-linejoin="round"/>
<rect x="100.8" y="32.6" width="23.4" height="27.2" rx="1" fill="url(#gPaper)" stroke="#8a8a8a" stroke-width="0.9"/><rect x="101" y="59" width="23" height="1.5" fill="#9a9a9a" opacity="0.6"/><circle cx="120.8" cy="37.6" r="7" fill="url(#gGlow)"/>
<path d="M143.5 35 L150 34 L151 56.5 L146 57 Z" fill="#9a9a9a" stroke="#6a6a6a" stroke-width="0.6"/><path d="M150.5 32.5 L171.8 32.5 L170.5 44 L148.5 44 Z" fill="#f6f6f6" stroke="#7a7a7a" stroke-width="0.7"/><rect x="152" y="35" width="17" height="1.6" fill="#bdbdbd"/><rect x="152" y="38" width="16" height="1.6" fill="#c4c4c4"/><rect x="152" y="41" width="16" height="1.6" fill="#c8c8c8"/><path d="M150.5 43.3 L174.6 43.3 L170.4 57.6 L146 57.6 Z" fill="url(#gFold)" stroke="#3a6ab0" stroke-width="0.7"/>
<rect x="202.3" y="33.3" width="24.6" height="25.2" rx="2.6" fill="url(#gBlueF)" stroke="#2828a0" stroke-width="1"/><rect x="205.7" y="34" width="18.2" height="11.8" fill="#f2f2ff"/><rect x="207.7" y="47.8" width="11.9" height="9.7" fill="#e4e4ea"/><rect x="209.6" y="50.6" width="2" height="4" fill="#1030d0"/>
<rect x="248.3" y="33.3" width="24.6" height="25.2" rx="2.6" fill="url(#gBlueF)" stroke="#2828a0" stroke-width="1"/><rect x="251.7" y="34" width="18.2" height="11.8" fill="#f2f2ff"/><rect x="253.7" y="47.8" width="11.9" height="9.7" fill="#e4e4ea"/><rect x="255.6" y="50.6" width="2" height="4" fill="#1030d0"/>
<g transform="translate(258.6,51) rotate(-45)"><path d="M0 0 L5 -2.6 L23 -2.6 L23 2.6 L5 2.6 Z" fill="#f8b418" stroke="#a03010" stroke-width="0.9"/><path d="M0 0 L5 -2.6 L5 2.6 Z" fill="#f4e0c0"/><rect x="19" y="-2.6" width="4" height="5.2" fill="#d84020"/></g>
<line x1="317" y1="46" x2="311" y2="40" stroke="#000" stroke-width="4.4" stroke-linecap="round"/><line x1="317" y1="46" x2="316.9" y2="37.6" stroke="#000" stroke-width="4.4" stroke-linecap="round"/><line x1="317" y1="46" x2="322.9" y2="40" stroke="#000" stroke-width="4.4" stroke-linecap="round"/><line x1="317" y1="46" x2="307.5" y2="43.6" stroke="#000" stroke-width="4.4" stroke-linecap="round"/><line x1="317" y1="46" x2="326.5" y2="43.6" stroke="#000" stroke-width="4.4" stroke-linecap="round"/><circle cx="311" cy="40" r="3.1" fill="#000"/><circle cx="316.9" cy="37.6" r="3.1" fill="#000"/><circle cx="322.9" cy="40" r="3.1" fill="#000"/><circle cx="307.5" cy="43.6" r="3.1" fill="#000"/><circle cx="326.5" cy="43.6" r="3.1" fill="#000"/><line x1="317" y1="46" x2="311" y2="40" stroke="#f8a830" stroke-width="2.2" stroke-linecap="round"/><line x1="317" y1="46" x2="316.9" y2="37.6" stroke="#f8a830" stroke-width="2.2" stroke-linecap="round"/><line x1="317" y1="46" x2="322.9" y2="40" stroke="#f8a830" stroke-width="2.2" stroke-linecap="round"/><line x1="317" y1="46" x2="307.5" y2="43.6" stroke="#f8a830" stroke-width="2.2" stroke-linecap="round"/><line x1="317" y1="46" x2="326.5" y2="43.6" stroke="#f8a830" stroke-width="2.2" stroke-linecap="round"/><circle cx="311" cy="40" r="2.1" fill="#f8a830"/><circle cx="316.9" cy="37.6" r="2.1" fill="#f8a830"/><circle cx="322.9" cy="40" r="2.1" fill="#f8a830"/><circle cx="307.5" cy="43.6" r="2.1" fill="#f8a830"/><circle cx="326.5" cy="43.6" r="2.1" fill="#f8a830"/><rect x="305.2" y="44.6" width="23.8" height="13.2" rx="2.5" fill="#000"/><rect x="306.8" y="44.2" width="20.6" height="1.6" rx="0.8" fill="#f8a830"/>
<defs><linearGradient id="gPrn" x1="0" y1="0" x2="0" y2="1"><stop offset="0" stop-color="#fafafa"/><stop offset="0.6" stop-color="#e4e4e4"/><stop offset="1" stop-color="#b8b8b8"/></linearGradient></defs><rect x="363.3" y="32.2" width="19" height="13" fill="#e8e8e8" stroke="#9a9a9a" stroke-width="0.8"/><rect x="366" y="35" width="13" height="1.2" fill="#c8c8c8"/><rect x="366" y="38" width="13" height="1.2" fill="#c8c8c8"/><path d="M361.5 43.3 L384.5 43.3 L386.8 49 L386.8 57 Q386.8 58.4 385.4 58.4 L360.6 58.4 Q359.2 58.4 359.2 57 L359.2 49 Z" fill="url(#gPrn)" stroke="#8a8a8a" stroke-width="0.8"/><rect x="361" y="48.5" width="24" height="1" fill="#a0a0a0"/><circle cx="363" cy="51" r="0.8" fill="#666"/><ellipse cx="373" cy="59.5" rx="13" ry="1.4" fill="#000" opacity="0.12"/><line x1="371.5" y1="44.5" x2="380" y2="52.2" stroke="#7a7a7a" stroke-width="3" stroke-linecap="round"/><line x1="372.5" y1="44.2" x2="380" y2="51.2" stroke="#c8c8c8" stroke-width="1" stroke-linecap="round"/><circle cx="368.4" cy="40.7" r="6.6" fill="#f8f8f8" stroke="#b0b0b0" stroke-width="0.7"/><circle cx="368.4" cy="40.7" r="5.2" fill="#b4cce8" stroke="#4a80d0" stroke-width="1.1"/><ellipse cx="367.4" cy="39" rx="3" ry="2" fill="#e0ecf8" opacity="0.8"/>
<path d="M413.7 37.6 L418 42.3 C422 37 426 33.7 431 33.7 C437 33.7 442 38.5 442 44.5 C442 51.5 435 57.5 426 57.5 L426.5 56 C432 54 437.5 50 437.5 45 C437.5 42 435 40.2 432 40.2 C428 40.2 424.5 43.5 421.8 46.6 L427 51.7 L413.7 51.7 Z" fill="url(#gUndo)" stroke="#188a34" stroke-width="0.8" stroke-linejoin="round"/>
<g transform="translate(901.8,0) scale(-1,1)"><path d="M413.7 37.6 L418 42.3 C422 37 426 33.7 431 33.7 C437 33.7 442 38.5 442 44.5 C442 51.5 435 57.5 426 57.5 L426.5 56 C432 54 437.5 50 437.5 45 C437.5 42 435 40.2 432 40.2 C428 40.2 424.5 43.5 421.8 46.6 L427 51.7 L413.7 51.7 Z" fill="url(#gRedo)" stroke="#82c08e" stroke-width="0.8" stroke-linejoin="round"/></g>
<ellipse cx="530" cy="57.5" rx="11" ry="1.6" fill="#bdbdbd" opacity="0.6"/><g transform="translate(529.8,45.2) rotate(-44)"><rect x="-13.4" y="-4.6" width="26.8" height="9.2" fill="#e07a7a"/><rect x="-13.4" y="-4.6" width="26.8" height="2.2" fill="#eaa0a0"/><rect x="-13.4" y="-1.3" width="26.8" height="2.6" fill="#f4f0f0"/><rect x="-13.4" y="-4.6" width="6.5" height="9.2" fill="#f2f2f2" stroke="#b8b8b8" stroke-width="0.5"/><rect x="12" y="-4.6" width="1.4" height="9.2" fill="#a0a0a0"/></g>
<path d="M586 46 L588 31.5 L590 31.8 L588 47 Z" fill="#f4f4f4" stroke="#8a8a8a" stroke-width="0.7"/><path d="M586 46 L598.8 37.3 L599.8 39.5 L588 48 Z" fill="#f4f4f4" stroke="#8a8a8a" stroke-width="0.7"/><ellipse cx="576.6" cy="47.9" rx="4.2" ry="2.6" transform="rotate(-18 576.6 47.9)" fill="none" stroke="#e07a7a" stroke-width="1.8"/><ellipse cx="588.2" cy="55.1" rx="2.8" ry="4.6" transform="rotate(-8 588.2 55.1)" fill="none" stroke="#e07a7a" stroke-width="1.8"/><path d="M580.5 46.5 L586 46 L587.5 50.5" fill="none" stroke="#e07a7a" stroke-width="1.8"/><path d="M572 57.5 H578.6 M575.3 54.2 V60.8" stroke="#444" stroke-width="1"/>
<rect x="617.6" y="30.4" width="21" height="25" rx="1" fill="#f4f4f4" stroke="#bdbdbd" stroke-width="0.7"/><path d="M620.5 37 H625 M620.5 39.7 H625 M620.5 42.4 H625 M620.5 45.1 H625" stroke="#d0d0d0" stroke-width="0.9"/><path d="M625.8 36.4 H646.6 V55.5 L641 61.2 H625.8 Z" fill="#f0f0f0" stroke="#b4b4b4" stroke-width="0.7"/><path d="M646.6 55.5 L641 55.5 L641 61.2 Z" fill="#c8c8c8"/><path d="M630 43.5 H643.5 M630 46 H643 M630 48.5 H641.5 M630 51.2 H643.5" stroke="#b8b8b8" stroke-width="0.9"/><path d="M618.3 56.6 H624.3 M621.3 53.6 V59.6" stroke="#444" stroke-width="1"/>
<rect x="664.6" y="32.6" width="26.3" height="28.2" rx="1.5" fill="#c88a1e" stroke="#9a6a20" stroke-width="0.8"/><rect x="667.8" y="34.1" width="20.4" height="24" fill="#fafafa"/><path d="M684 58.1 L688.2 58.1 L688.2 53.8 Z" fill="#9a9a9a"/><path d="M671 40.5 H685 M671 43.3 H684.2 M671 46 H683 M671 48.7 H685 M671 51.4 H680" stroke="#c0c0c0" stroke-width="0.9"/><path d="M671.4 33.5 H674 V30 H682 V33.5 H684.6 V37.1 H671.4 Z" fill="#9c9c94" stroke="#6e6e68" stroke-width="0.7"/>
<line x1="722.1" y1="56.6" x2="743.8" y2="56.6" stroke="#ff0000" stroke-width="1.3"/><g transform="translate(723.4,55.4) rotate(-44)"><path d="M0 0 L5.5 -3 L26 -3 Q28 0 26 3 L5.5 3 Z" fill="#d82020" stroke="#6a3a10" stroke-width="0.7"/><path d="M0 0 L5.5 -3 L5.5 3 Z" fill="#f0c8a0"/><path d="M0 0 L1.8 -1 L1.8 1 Z" fill="#111"/><rect x="19.5" y="-3" width="2.2" height="6" fill="#c8c8c8"/><rect x="6" y="-3" width="13" height="1.6" fill="#f05030" opacity="0.7"/></g>
<rect x="764.8" y="35.6" width="28.2" height="21.4" rx="1" fill="#000080" stroke="#111" stroke-width="0.9"/><path d="M768.4 53.6 L789.7 39.5 L789.7 53.6 Z" fill="none" stroke="#f0f0f8" stroke-width="1.2" stroke-dasharray="2.2 1.4"/>
<circle cx="825" cy="45.7" r="12.6" fill="none" stroke="#000" stroke-width="2.2"/><line x1="810.7" y1="59.7" x2="839" y2="31.7" stroke="#0000ff" stroke-width="1"/>
<rect x="869" y="33" width="2.2" height="2.2" fill="#000"/><rect x="869" y="41" width="2.2" height="2.2" fill="#000"/><rect x="869" y="49" width="2.2" height="2.2" fill="#000"/><rect x="869" y="57" width="2.2" height="2.2" fill="#000"/><rect x="877" y="33" width="2.2" height="2.2" fill="#000"/><rect x="877" y="41" width="2.2" height="2.2" fill="#000"/><rect x="877" y="49" width="2.2" height="2.2" fill="#000"/><rect x="877" y="57" width="2.2" height="2.2" fill="#000"/><rect x="885" y="33" width="2.2" height="2.2" fill="#000"/><rect x="885" y="41" width="2.2" height="2.2" fill="#000"/><rect x="885" y="49" width="2.2" height="2.2" fill="#000"/><rect x="885" y="57" width="2.2" height="2.2" fill="#000"/><rect x="893" y="33" width="2.2" height="2.2" fill="#000"/><rect x="893" y="41" width="2.2" height="2.2" fill="#000"/><rect x="893" y="49" width="2.2" height="2.2" fill="#000"/><rect x="893" y="57" width="2.2" height="2.2" fill="#000"/>
<g opacity="1"><ellipse cx="936.9" cy="55.9" rx="9" ry="2.2" fill="#000" opacity="0.06"/><line x1="944.6999999999999" y1="51.7" x2="950.5" y2="57.3" stroke="#6a6a6a" stroke-width="3.8" stroke-linecap="round"/><line x1="945.4" y1="51.7" x2="950.5" y2="56.5" stroke="#9a9a9a" stroke-width="0.9" stroke-linecap="round"/><circle cx="934.9" cy="41.9" r="11.2" fill="#f2f2ee" stroke="#b8b8b0" stroke-width="0.8"/><circle cx="934.9" cy="41.9" r="9.5" fill="url(#gMag)" stroke="#dcdcd4" stroke-width="0.6"/></g>
<path d="M932.9 35.5 h4 v4.4 h4.4 v4 h-4.4 v4.4 h-4 v-4.4 h-4.4 v-4 h4.4 Z" fill="#fff" stroke="#2a5aa8" stroke-width="0.8"/>
<g opacity="1"><ellipse cx="983.1" cy="55.9" rx="9" ry="2.2" fill="#000" opacity="0.06"/><line x1="990.9" y1="51.7" x2="996.7" y2="57.3" stroke="#5e5e5e" stroke-width="3.8" stroke-linecap="round"/><line x1="991.6" y1="51.7" x2="996.7" y2="56.5" stroke="#9a9a9a" stroke-width="0.9" stroke-linecap="round"/><circle cx="981.1" cy="41.9" r="11.2" fill="#f2f2ee" stroke="#b8b8b0" stroke-width="0.8"/><circle cx="981.1" cy="41.9" r="9.5" fill="url(#gMag)" stroke="#dcdcd4" stroke-width="0.6"/></g>
<rect x="975.3" y="39.9" width="11.6" height="4" fill="#fff" stroke="#2a5aa8" stroke-width="0.8"/>
<g opacity="1"><ellipse cx="1029" cy="55.9" rx="9" ry="2.2" fill="#000" opacity="0.06"/><line x1="1036.8" y1="51.7" x2="1042.6" y2="57.3" stroke="#5e5e5e" stroke-width="3.8" stroke-linecap="round"/><line x1="1037.5" y1="51.7" x2="1042.6" y2="56.5" stroke="#9a9a9a" stroke-width="0.9" stroke-linecap="round"/><circle cx="1027" cy="41.9" r="11.2" fill="#f2f2ee" stroke="#b8b8b0" stroke-width="0.8"/><circle cx="1027" cy="41.9" r="9.5" fill="url(#gMag)" stroke="#dcdcd4" stroke-width="0.6"/></g>
<path d="M1021 39 V36 H1024 M1030 36 H1033 V39 M1033 45 V48 H1030 M1024 48 H1021 V45" fill="none" stroke="#fff" stroke-width="2"/>
<g opacity="1"><ellipse cx="1075" cy="55.6" rx="9" ry="2.2" fill="#000" opacity="0.06"/><line x1="1082.8" y1="51.400000000000006" x2="1088.6" y2="57.0" stroke="#a8a8a8" stroke-width="3.8" stroke-linecap="round"/><line x1="1083.5" y1="51.400000000000006" x2="1088.6" y2="56.2" stroke="#9a9a9a" stroke-width="0.9" stroke-linecap="round"/><circle cx="1073" cy="41.6" r="11.2" fill="#f2f2ee" stroke="#b8b8b0" stroke-width="0.8"/><circle cx="1073" cy="41.6" r="9.5" fill="url(#gMagP)" stroke="#dcdcd4" stroke-width="0.6"/></g>
<path d="M1067 39 V36 H1070 M1076 36 H1079 V39 M1079 45 V48 H1076 M1070 48 H1067 V45" fill="none" stroke="#f07070" stroke-width="2"/>
<g opacity="1"><ellipse cx="1121.3" cy="56" rx="9" ry="2.2" fill="#000" opacity="0.06"/><line x1="1129.1" y1="51.8" x2="1134.8999999999999" y2="57.4" stroke="#5e5e5e" stroke-width="3.8" stroke-linecap="round"/><line x1="1129.8" y1="51.8" x2="1134.8999999999999" y2="56.6" stroke="#9a9a9a" stroke-width="0.9" stroke-linecap="round"/><circle cx="1119.3" cy="42" r="11.2" fill="#f2f2ee" stroke="#b8b8b0" stroke-width="0.8"/><circle cx="1119.3" cy="42" r="9.5" fill="url(#gMag)" stroke="#dcdcd4" stroke-width="0.6"/></g>
<path d="M1112 42 L1118 36.5 V39.8 H1126 V44.2 H1118 V47.5 Z" fill="#fff" stroke="#2a5aa8" stroke-width="0.7"/>
<rect x="1153.5" y="30.5" width="26.8" height="17.8" fill="#fff" stroke="#7a9ad0" stroke-width="1"/>
<g transform="translate(1167.3,44.7) scale(0.82) translate(-1167.3,-44.7)"><g opacity="1"><ellipse cx="1169.3" cy="58.7" rx="9" ry="2.2" fill="#000" opacity="0.06"/><line x1="1177.1" y1="54.5" x2="1182.8999999999999" y2="60.1" stroke="#5e5e5e" stroke-width="3.8" stroke-linecap="round"/><line x1="1177.8" y1="54.5" x2="1182.8999999999999" y2="59.300000000000004" stroke="#9a9a9a" stroke-width="0.9" stroke-linecap="round"/><circle cx="1167.3" cy="44.7" r="11.2" fill="#f2f2ee" stroke="#b8b8b0" stroke-width="0.8"/><circle cx="1167.3" cy="44.7" r="9.5" fill="url(#gMag)" stroke="#dcdcd4" stroke-width="0.6"/></g></g>
<g opacity="1"><ellipse cx="1214" cy="57" rx="9" ry="2.2" fill="#000" opacity="0.06"/><line x1="1221.8" y1="52.8" x2="1227.6" y2="58.4" stroke="#5e5e5e" stroke-width="3.8" stroke-linecap="round"/><line x1="1222.5" y1="52.8" x2="1227.6" y2="57.6" stroke="#9a9a9a" stroke-width="0.9" stroke-linecap="round"/><circle cx="1212" cy="43" r="11.2" fill="#f2f2ee" stroke="#b8b8b0" stroke-width="0.8"/><circle cx="1212" cy="43" r="9.5" fill="url(#gMag)" stroke="#dcdcd4" stroke-width="0.6"/></g>
<path d="M1212 30 L1215 34 H1213 V41.8 H1220.8 V40 L1225 43 L1220.8 46 V44.2 H1213 V52 H1215 L1212 56 L1209 52 H1211 V44.2 H1203.2 V46 L1199 43 L1203.2 40 V41.8 H1211 V34 H1209 Z" fill="#fff" stroke="#4a7ac8" stroke-width="0.7"/>
<rect x="7" y="116" width="2" height="2" fill="#a6a6a6"/>
<rect x="13" y="116" width="2" height="2" fill="#a6a6a6"/>
<rect x="19" y="116" width="2" height="2" fill="#a6a6a6"/>
<rect x="25" y="116" width="2" height="2" fill="#a6a6a6"/>
<rect x="31" y="116" width="2" height="2" fill="#a6a6a6"/>
<rect x="37" y="116" width="2" height="2" fill="#a6a6a6"/>
<rect x="43" y="116" width="2" height="2" fill="#a6a6a6"/>
<rect x="49" y="116" width="2" height="2" fill="#a6a6a6"/>
<rect x="55" y="116" width="2" height="2" fill="#a6a6a6"/>
<rect x="61" y="116" width="2" height="2" fill="#a6a6a6"/>
<path d="M31 133 L39 129 L39 137 Z" fill="#000"/>
<path d="M13.5 173.5 H21.5 M17.5 169.5 V177.5" stroke="#111" stroke-width="1.1"/>
<circle cx="42.6" cy="162.3" r="1.6" fill="red"/><circle cx="42.6" cy="169.3" r="1.6" fill="red"/><circle cx="42.6" cy="176.3" r="1.6" fill="red"/><circle cx="42.6" cy="183.3" r="1.6" fill="red"/><circle cx="49.550000000000004" cy="162.3" r="1.6" fill="red"/><circle cx="49.550000000000004" cy="169.3" r="1.6" fill="red"/><circle cx="49.550000000000004" cy="176.3" r="1.6" fill="red"/><circle cx="49.550000000000004" cy="183.3" r="1.6" fill="red"/><circle cx="56.5" cy="162.3" r="1.6" fill="red"/><circle cx="56.5" cy="169.3" r="1.6" fill="red"/><circle cx="56.5" cy="176.3" r="1.6" fill="red"/><circle cx="56.5" cy="183.3" r="1.6" fill="red"/><circle cx="63.45" cy="162.3" r="1.6" fill="red"/><circle cx="63.45" cy="169.3" r="1.6" fill="red"/><circle cx="63.45" cy="176.3" r="1.6" fill="red"/><circle cx="63.45" cy="183.3" r="1.6" fill="red"/>
<line x1="7.4" y1="215.3" x2="28.4" y2="226.3" stroke="#1a1a1a" stroke-width="1.1"/><path d="M15.9 205.3 Q16.5 216 28.4 217.8" fill="none" stroke="#1a1a1a" stroke-width="1.1"/><circle cx="7.4" cy="215.3" r="1.9" fill="red"/><circle cx="28.4" cy="226.3" r="1.9" fill="red"/><circle cx="15.9" cy="205.3" r="1.9" fill="red"/><circle cx="28.4" cy="217.8" r="1.9" fill="red"/>
<polyline points="42.6,216.5 64,205" fill="none" stroke="#1a1a1a" stroke-width="1" stroke-dasharray="2 1.5"/><polyline points="50.8,226.3 51.7,221.5 54.5,217.2 58.7,214.8 63.8,213.7" fill="none" stroke="#1a1a1a" stroke-width="1" stroke-dasharray="2 1.5"/><circle cx="42.6" cy="216.5" r="1.9" fill="red"/><circle cx="47.7" cy="213.8" r="1.9" fill="red"/><circle cx="53" cy="210.9" r="1.9" fill="red"/><circle cx="58.3" cy="208" r="1.9" fill="red"/><circle cx="64" cy="205" r="1.9" fill="red"/><circle cx="50.8" cy="226.3" r="1.9" fill="red"/><circle cx="51.9" cy="221.5" r="1.9" fill="red"/><circle cx="54.5" cy="217.4" r="1.9" fill="red"/><circle cx="58.9" cy="215" r="1.9" fill="red"/><circle cx="63.8" cy="213.7" r="1.9" fill="red"/>
<path d="M9.8 241.3 L19.3 252.3 L15.5 261" fill="none" stroke="#1a1a1a" stroke-width="1.1"/><path d="M19.3 252.3 Q21 248 28.4 248.5" fill="none" stroke="#1a1a1a" stroke-width="1.1"/><path d="M16 248 Q19 245 23 248" fill="none" stroke="#1a1a1a" stroke-width="0.6" stroke-dasharray="1 1"/><circle cx="19.3" cy="252.3" r="1.9" fill="red"/>
<circle cx="57" cy="248.5" r="6.6" fill="none" stroke="#1a1a1a" stroke-width="1.1"/><line x1="43.2" y1="259.5" x2="50.6" y2="245" stroke="#1a1a1a" stroke-width="1.1"/><circle cx="50.6" cy="245" r="1.9" fill="red"/>
<line x1="6.6" y1="286.4" x2="28.4" y2="275.4" stroke="#1a1a1a" stroke-width="1.1"/><path d="M15.2 296.2 Q16 285 28.4 283.5" fill="none" stroke="#1a1a1a" stroke-width="1.1"/><circle cx="17.4" cy="280.8" r="1.9" fill="red"/><circle cx="28" cy="295.8" r="1.9" fill="red"/>
<circle cx="53" cy="285.8" r="9.8" fill="none" stroke="#1a1a1a" stroke-width="1.1"/><circle cx="53" cy="285.8" r="1.9" fill="red"/><circle cx="53" cy="276" r="1.9" fill="red"/><circle cx="53" cy="295.6" r="1.9" fill="red"/><circle cx="43.2" cy="285.8" r="1.9" fill="red"/><circle cx="62.8" cy="285.8" r="1.9" fill="red"/>
<line x1="7.2" y1="329.9" x2="28.8" y2="318.4" stroke="#1a1a1a" stroke-width="1.1"/><path d="M15.5 339.4 Q16 328 28.8 326.5" fill="none" stroke="#1a1a1a" stroke-width="1.1"/><circle cx="17.8" cy="324" r="1.9" fill="red"/><circle cx="19.3" cy="330.3" r="1.9" fill="red"/>
<rect x="41.3" y="319.3" width="23.5" height="19" fill="none" stroke="#333" stroke-width="1.6"/><line x1="43" y1="337" x2="63" y2="320.5" stroke="#888" stroke-width="0.7" stroke-dasharray="1.5 1.5"/><circle cx="53" cy="328.8" r="1.9" fill="red"/>
<line x1="8.5" y1="372" x2="29.4" y2="361.6" stroke="#1a1a1a" stroke-width="1.1"/><path d="M16.7 381.8 Q17 371 28.8 369.7" fill="none" stroke="#1a1a1a" stroke-width="1.1"/><path d="M6.5 368 L12 364.5 L11 368.5 Z" fill="#000"/><line x1="7" y1="368" x2="13" y2="365" stroke="#000" stroke-width="1.6"/><path d="M19 378 L22 381.5 L19.5 383 Z" fill="#000"/><line x1="20" y1="377" x2="20" y2="382" stroke="#000" stroke-width="1.6"/><circle cx="15.2" cy="368.6" r="1.9" fill="red"/><circle cx="18.9" cy="373.9" r="1.9" fill="red"/>
<line x1="43.6" y1="372" x2="64" y2="361" stroke="#1a1a1a" stroke-width="1.1" stroke-dasharray="2 1.5"/><line x1="42" y1="369.5" x2="47" y2="366.5" stroke="#000" stroke-width="1.8"/><circle cx="49.6" cy="368.6" r="1.9" fill="red"/><circle cx="64" cy="361" r="1.4" fill="#000"/><circle cx="43" cy="372" r="1.4" fill="#000"/>
<line x1="5.7" y1="412.7" x2="30.3" y2="419.9" stroke="#1a1a1a" stroke-width="1.1"/><line x1="24.6" y1="402.7" x2="18.4" y2="426.9" stroke="#1a1a1a" stroke-width="1.1"/><circle cx="20.8" cy="417.4" r="1.9" fill="red"/>
<line x1="43.2" y1="416.5" x2="53.4" y2="419.7" stroke="#1a1a1a" stroke-width="1.1"/><line x1="62.9" y1="407" x2="60.2" y2="416.5" stroke="#1a1a1a" stroke-width="1.1"/><circle cx="58.7" cy="421.2" r="1.9" fill="red"/>
<path d="M14.2 490.2 V504.8 H30.7" fill="none" stroke="#555" stroke-width="1.1"/><circle cx="28" cy="491" r="1.9" fill="red"/>
<path d="M40.7 510.5 L57.8 493.4 M40.7 510.5 H65.3 M57.8 493.4 A17 17 0 0 1 65.3 510.5" fill="none" stroke="#333" stroke-width="1.1"/><circle cx="57.8" cy="493.4" r="1.9" fill="red"/>
<path d="M9.5 535.5 H26.1 M9.5 535.5 V551.6" stroke="#aaa" stroke-width="0.9"/><circle cx="9.5" cy="535.5" r="2.3" fill="red"/><circle cx="26.1" cy="535.5" r="1.3" fill="#000"/><circle cx="9.5" cy="551.6" r="1.3" fill="#000"/>
<path d="M60.6 551.8 V535.5 M60.6 551.8 H44.5" stroke="#aaa" stroke-width="0.9"/><circle cx="60.6" cy="551.8" r="2.3" fill="red"/><circle cx="60.6" cy="535.5" r="1.3" fill="#000"/><circle cx="44.5" cy="551.8" r="1.3" fill="#000"/>
<path d="M8 580 H26 V593 H17 L14.5 596 H8 Z" fill="none" stroke="#f0a0a0" stroke-width="0.8"/><circle cx="14.5" cy="585" r="3.2" fill="none" stroke="#f0a0a0" stroke-width="0.8"/><path d="M17 590 L22 585 V590 Z" fill="none" stroke="#f0a0a0" stroke-width="0.8"/><circle cx="18" cy="586.9" r="1.7" fill="red"/>
<path d="M14 630.5 H22 M18 626.5 V634.5" stroke="#333" stroke-width="1.1"/>
<path d="M40.7 629.5 H64.4 M52.5 617.8 V641.4" stroke="#000" stroke-width="1.1"/><circle cx="52.5" cy="629.5" r="3.4" fill="none" stroke="red" stroke-width="1"/><path d="M49.1 629.5 H55.9 M52.5 626.1 V632.9" stroke="red" stroke-width="0.9"/>
<path d="M5.7 664.2 H29.4" stroke="#000" stroke-width="1.1"/><circle cx="17.4" cy="664.2" r="3.4" fill="none" stroke="red" stroke-width="1"/><path d="M13.999999999999998 664.2 H20.799999999999997 M17.4 660.8000000000001 V667.6" stroke="red" stroke-width="0.9"/>
<path d="M52.5 652.8 V675.9" stroke="#000" stroke-width="1.1"/><circle cx="52.5" cy="664.2" r="3.4" fill="none" stroke="red" stroke-width="1"/><path d="M49.1 664.2 H55.9 M52.5 660.8000000000001 V667.6" stroke="red" stroke-width="0.9"/>
<path d="M9 708 L27 698" stroke="#111" stroke-width="1.2"/><path d="M9 689.5 L9.5 693 M12.5 689.5 L13 692.8 M16 691 L15 694 M19.5 692.5 L17.5 695.5 M22.5 695 L20.5 697.5 M26.5 703.5 L29.5 702.5 M27.5 707.5 L30.5 707.5" stroke="#777" stroke-width="0.9"/><circle cx="8.5" cy="708.7" r="3.4" fill="none" stroke="red" stroke-width="1"/><path d="M5.1 708.7 H11.9 M8.5 705.3000000000001 V712.1" stroke="red" stroke-width="0.9"/>
<circle cx="15" cy="737.3" r="3.3" fill="none" stroke="red" stroke-width="1"/><path d="M11.7 737.3 H18.3 M15 734.0 V740.5999999999999" stroke="red" stroke-width="0.9"/><path d="M15.9 739.4 L15.9 751 L18.6 748.6 L20.6 753 L22.3 752.2 L20.4 747.9 L23.8 747.7 Z" fill="#fff" stroke="#333" stroke-width="0.7"/>
<ellipse cx="46.5" cy="738" rx="2.6" ry="3.8" fill="none" stroke="#000" stroke-width="1.6"/><path d="M48.900000000000006 737.1 H61.7 V741.2 H59.7 V739.4 H58.2 V741.2 H56.7 V739 H48.900000000000006 Z" fill="#000"/><circle cx="52.4" cy="750.5" r="3.3" fill="none" stroke="red" stroke-width="1"/><path d="M49.1 750.5 H55.699999999999996 M52.4 747.2 V753.8" stroke="red" stroke-width="0.9"/>
<ellipse cx="11.5" cy="785.3" rx="2.6" ry="3.8" fill="none" stroke="#000" stroke-width="1.6"/><path d="M13.899999999999999 784.4 H26.7 V788.5 H24.7 V786.6999999999999 H23.2 V788.5 H21.7 V786.3 H13.899999999999999 Z" fill="#000"/>
<circle cx="1164" cy="118" r="7" fill="#6c6c6c"/><path d="M1161 115 L1167 121 M1167 115 L1161 121" stroke="#fff" stroke-width="1.8"/>
<circle cx="1182" cy="118" r="7" fill="#6c6c6c"/><rect x="1180.3" y="114.5" width="5" height="4" fill="none" stroke="#fff" stroke-width="1"/><rect x="1178.5" y="117" width="5" height="4" fill="#6c6c6c" stroke="#fff" stroke-width="1"/>
<g transform="translate(1184.5,142.5) scale(1)"><path d="M-6.8 0.4 Q0 -9.4 6.8 0.4 Q0 8.6 -6.8 0.4 Z" fill="#fff" stroke="#000" stroke-width="1.7" stroke-linejoin="round"/><path d="M-6.8 0.4 Q0 -9.4 6.8 0.4" fill="none" stroke="#000" stroke-width="2.6"/><circle cx="0" cy="0.5" r="3.1" fill="#000"/><circle cx="-1" cy="-0.6" r="0.9" fill="#999" opacity="0.6"/><path d="M-7.6 -0.8 L-5.8 -2.2 M5.8 -2.2 L7.8 -0.4" stroke="#000" stroke-width="1.3"/></g>
<g transform="translate(1244.5,142.5) scale(1)"><path d="M-6.8 0.4 Q0 -9.4 6.8 0.4 Q0 8.6 -6.8 0.4 Z" fill="#fff" stroke="#a4a4a4" stroke-width="1.7" stroke-linejoin="round"/><path d="M-6.8 0.4 Q0 -9.4 6.8 0.4" fill="none" stroke="#a4a4a4" stroke-width="2.6"/><circle cx="0" cy="0.5" r="3.1" fill="#a4a4a4"/><circle cx="-1" cy="-0.6" r="0.9" fill="#999" opacity="0.6"/><path d="M-7.6 -0.8 L-5.8 -2.2 M5.8 -2.2 L7.8 -0.4" stroke="#a4a4a4" stroke-width="1.3"/></g>
<path d="M1298.7 141.3 H1311.2 V144.7 H1298.7 Z M1303.3 137 H1306.7 V149 H1303.3 Z" fill="#f00"/>
<rect x="1359.3" y="141.2" width="11.4" height="3.4" fill="#e00"/>
<g transform="translate(1418,149.7) rotate(-43.8)"><path d="M0 0 L3.5 -1.8 L17.803535037967297 -1.8 L17.803535037967297 1.8 L3.5 1.8 Z" fill="#e8b040" stroke="#8a6a20" stroke-width="0.5"/><path d="M0 0 L3.5 -1.8 L3.5 1.8 Z" fill="#f0d8b0"/><rect x="16.303535037967297" y="-1.8" width="3.5" height="3.6" fill="#e02020"/></g>
<rect x="1161.5" y="163.7" width="15" height="8" fill="#fff" stroke="#000" stroke-width="1"/>
<g transform="translate(1394.7,173) rotate(-43.6)"><path d="M0 0 L3.5 -1.8 L15.682759965570945 -1.8 L15.682759965570945 1.8 L3.5 1.8 Z" fill="#e8b040" stroke="#8a6a20" stroke-width="0.5"/><path d="M0 0 L3.5 -1.8 L3.5 1.8 Z" fill="#f0d8b0"/><rect x="14.182759965570945" y="-1.8" width="3.5" height="3.6" fill="#e02020"/></g>
<g transform="translate(1422.7,166.3) scale(1)"><path d="M-6.8 0.4 Q0 -9.4 6.8 0.4 Q0 8.6 -6.8 0.4 Z" fill="#fff" stroke="#000" stroke-width="1.7" stroke-linejoin="round"/><path d="M-6.8 0.4 Q0 -9.4 6.8 0.4" fill="none" stroke="#000" stroke-width="2.6"/><circle cx="0" cy="0.5" r="3.1" fill="#000"/><circle cx="-1" cy="-0.6" r="0.9" fill="#999" opacity="0.6"/><path d="M-7.6 -0.8 L-5.8 -2.2 M5.8 -2.2 L7.8 -0.4" stroke="#000" stroke-width="1.3"/></g>
<path d="M1442 166.5 V164 A3 3.5 0 0 1 1448 164 V166.5" fill="none" stroke="#b8b8b8" stroke-width="1.6"/><rect x="1440" y="166.3" width="10" height="7.4" fill="#b8b8b8"/>
<rect x="1462.5" y="116" width="2" height="2" fill="#a8a8a8"/>
<rect x="1468.5" y="116" width="2" height="2" fill="#a8a8a8"/>
<rect x="1474.5" y="116" width="2" height="2" fill="#a8a8a8"/>
<rect x="1480.5" y="116" width="2" height="2" fill="#a8a8a8"/>
<rect x="1486.5" y="116" width="2" height="2" fill="#a8a8a8"/>
<line x1="1457" y1="261.5" x2="1500" y2="261.5" stroke="#777" stroke-width="1" stroke-dasharray="1 2.5"/>
<line x1="1457" y1="409.5" x2="1500" y2="409.5" stroke="#777" stroke-width="1" stroke-dasharray="1 2.5"/>
<rect x="1463.5" y="127.5" width="27" height="27" fill="#fff" stroke="#000" stroke-width="1"/><rect x="1463.5" y="127.5" width="27" height="4" fill="#000"/><rect x="1464.8" y="128.3" width="2.6" height="2.6" fill="#fff"/>
<rect x="1463.5" y="174.5" width="27" height="27" fill="#fff" stroke="#000" stroke-width="1"/><rect x="1463.5" y="174.5" width="27" height="4" fill="#000"/><rect x="1464.8" y="175.3" width="2.6" height="2.6" fill="#fff"/>
<rect x="1463.5" y="220.5" width="27" height="27" fill="#fff" stroke="#000" stroke-width="1"/><rect x="1463.5" y="220.5" width="27" height="4" fill="#000"/><rect x="1464.8" y="221.3" width="2.6" height="2.6" fill="#fff"/>
<rect x="1463.5" y="276.5" width="27" height="27" fill="#fff" stroke="#000" stroke-width="1"/><rect x="1463.5" y="276.5" width="27" height="4" fill="#000"/><rect x="1464.8" y="277.3" width="2.6" height="2.6" fill="#fff"/>
<rect x="1463.5" y="322.5" width="27" height="27" fill="#fff" stroke="#000" stroke-width="1"/><rect x="1463.5" y="322.5" width="27" height="4" fill="#000"/><rect x="1464.8" y="323.3" width="2.6" height="2.6" fill="#fff"/>
<rect x="1463.5" y="368.5" width="27" height="27" fill="#fff" stroke="#000" stroke-width="1"/><rect x="1463.5" y="368.5" width="27" height="4" fill="#000"/><rect x="1464.8" y="369.3" width="2.6" height="2.6" fill="#fff"/>
<rect x="1463.5" y="424.5" width="27" height="27" fill="#fff" stroke="#000" stroke-width="1"/><rect x="1463.5" y="424.5" width="27" height="4" fill="#000"/><rect x="1464.8" y="425.3" width="2.6" height="2.6" fill="#fff"/>
<rect x="1463.5" y="471.5" width="27" height="27" fill="#fff" stroke="#000" stroke-width="1"/><rect x="1463.5" y="471.5" width="27" height="4" fill="#000"/><rect x="1464.8" y="472.3" width="2.6" height="2.6" fill="#fff"/>
<path d="M1470 140 L1472 139 L1472 147 L1470 148 Z M1473 138 L1484 134.5 L1484 143 L1473 147 Z" fill="#e8e8e8" stroke="#555" stroke-width="0.7"/><path d="M1477 144 L1480 138 L1481 143 Z" fill="none" stroke="#f04040" stroke-width="0.7"/>
<rect x="1469" y="184" width="9" height="7" fill="#f4e4b0" stroke="#777" stroke-width="0.7"/><circle cx="1479" cy="191" r="4" fill="#f4e4b0" stroke="#777" stroke-width="0.7"/>
<rect x="1469.5" y="229.5" width="16" height="11" rx="2" fill="#f2f2f2" stroke="#b8c8e8" stroke-width="0.8"/>
<rect x="1467" y="284.0" width="3.5" height="3" fill="#000"/><rect x="1473" y="284.3" width="14" height="2.8" fill="#fff" stroke="#333" stroke-width="0.6"/>
<rect x="1467" y="289.5" width="3.5" height="3" fill="#000"/><rect x="1473" y="289.8" width="14" height="2.8" fill="#fff" stroke="#333" stroke-width="0.6"/>
<rect x="1467" y="295.0" width="3.5" height="3" fill="#000"/><rect x="1473" y="295.3" width="14" height="2.8" fill="#fff" stroke="#333" stroke-width="0.6"/>
<path d="M1470 331 Q1477 327 1484 331 L1478 337 V344 L1476 342 V337 Z" fill="#8a8a8a" stroke="#555" stroke-width="0.5"/>
<path d="M1469 377 L1474 380 H1484 V388 H1474 L1469 391 Z" fill="#fff" stroke="#555" stroke-width="0.7"/><rect x="1474" y="380" width="10" height="8" fill="#a8a8a8"/><line x1="1467" y1="384" x2="1487" y2="384" stroke="#f08080" stroke-width="0.6" stroke-dasharray="1 1"/>
<path d="M1466 431 H1476 M1466 434 H1475 M1466 437 H1476 M1466 440 H1477" stroke="#888" stroke-width="0.6"/><rect x="1463.5" y="446.5" width="27" height="5" fill="#fff" stroke="#000" stroke-width="0.7"/><path d="M1469 449 H1486" stroke="#999" stroke-width="0.6"/>
<rect x="1469.5" y="478.5" width="15" height="16" rx="1" fill="#c88a1e"/><rect x="1471.5" y="480" width="11" height="13" fill="#f4f4f4"/><rect x="1474" y="477.5" width="6" height="3" fill="#999"/>
<circle cx="101.8" cy="119" r="5.6" fill="#e8eef8" stroke="#24348a" stroke-width="1.8"/><path d="M98.5 117 H105 M98.5 120 H105 M101.8 114.5 V123" stroke="#b0b8d0" stroke-width="0.5"/><path d="M100.5 117 L106.5 123.5" stroke="#e8b020" stroke-width="1.8"/><path d="M106 123 L107.5 124.5" stroke="#d04040" stroke-width="1.5"/>
<circle cx="509.6" cy="821.9" r="3" fill="#c4c4c4"/><circle cx="942.5" cy="821.9" r="3" fill="#c4c4c4"/><circle cx="1272" cy="821.9" r="3" fill="#c4c4c4"/>
<rect x="717.5" y="806.3" width="17" height="29.2" rx="8.5" fill="#fff" stroke="#555" stroke-width="0.8"/><path d="M717.8 819.5 Q726 817.5 734.2 819.5" fill="none" stroke="#555" stroke-width="0.8"/><line x1="726" y1="806.5" x2="726" y2="818.3" stroke="#555" stroke-width="0.7"/><rect x="724.3" y="808.3" width="3.4" height="7" rx="1.7" fill="#fff" stroke="#555" stroke-width="0.7"/>
<rect x="1131.5" y="780.5" width="16" height="10" fill="#f4f4f4" stroke="#222" stroke-width="1"/><rect x="1131.5" y="780.5" width="16" height="2.5" fill="#111"/>
</svg>
<div class="a" style="left:332px;top:419px;width:87px;height:25px;border-radius:3px;background:linear-gradient(#fbfbfb,#e6e8ec);border:1px solid #d8d8d8"></div>
<span class="a t" style="left:337px;top:424px;font-size:14px;color:#000">Clic derecho</span>
<span class="a t" style="left:307px;top:45.5px;font-size:12.5px;font-weight:bold;color:#fff;letter-spacing:-0.6px;transform:scaleX(0.82);transform-origin:0 0">SVG</span>
</body></html>
